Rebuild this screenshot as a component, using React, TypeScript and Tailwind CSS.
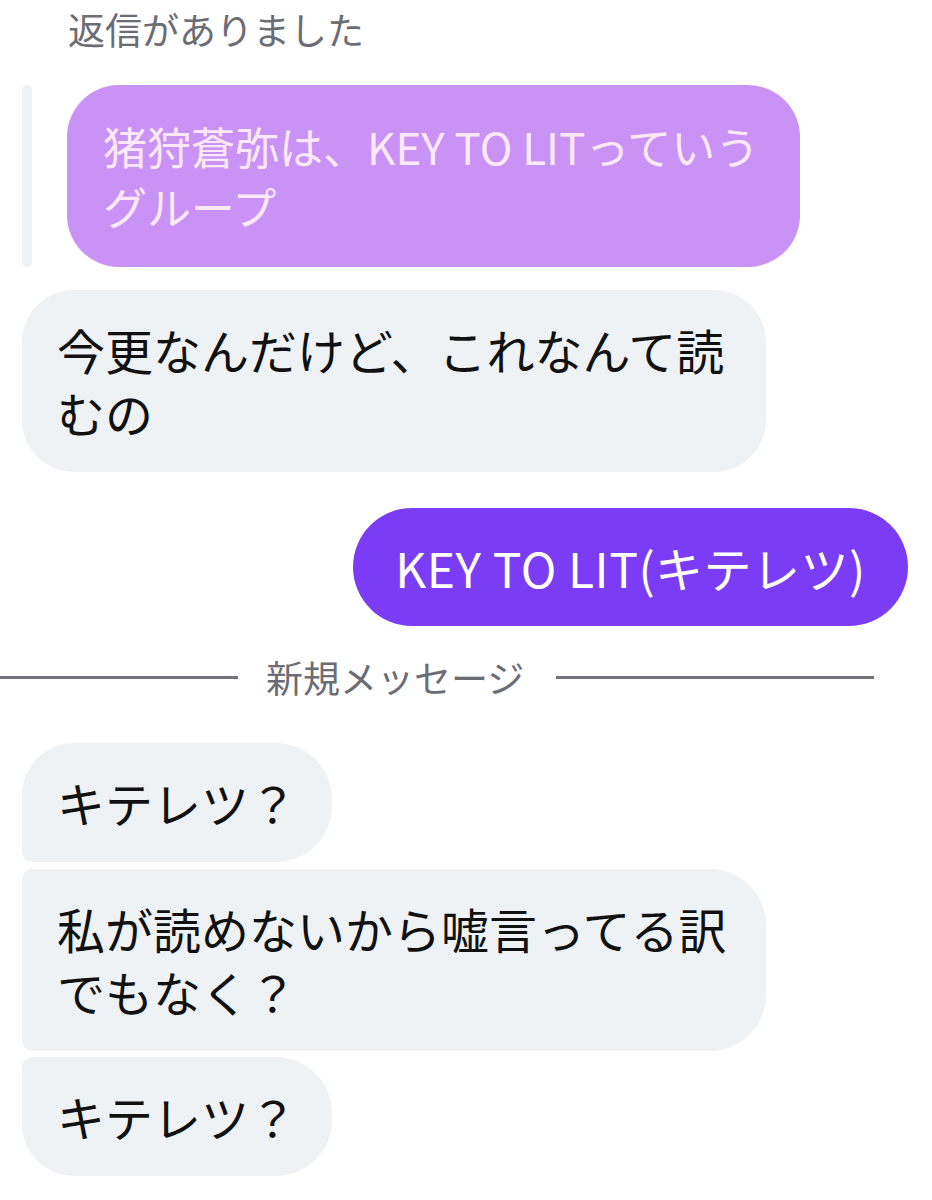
import React from "react";

const font = { fontFamily: '"Noto Sans CJK JP", "Noto Sans", sans-serif' };

export default function App() {
  return (
    <div
      className="w-[932px] h-[1200px] bg-white overflow-hidden flex flex-col"
      style={font}
    >
      {/* header */}
      <div className="pt-[5px] pl-[68px] text-[37px] leading-[48px] text-[#6c6c74]">
        返信がありました
      </div>

      {/* quoted reply */}
      <div className="mt-[32px] flex pl-[22px]">
        <div className="w-[10px] h-[182px] rounded-full bg-[#eef1f5]" />
        <div className="ml-[35px] w-[733px] h-[182px] rounded-[52px] bg-[#c993f6] px-[36px] py-[31px] text-[44px] leading-[60px] text-[#fbe9fb]">
          <div className="whitespace-nowrap">猪狩蒼弥は、KEY TO LITっていう</div>
          <div className="whitespace-nowrap">グループ</div>
        </div>
      </div>

      {/* incoming 1 */}
      <div className="mt-[23px] pl-[22px]">
        <div className="w-[744px] rounded-[52px] bg-[#eff2f5] px-[35px] py-[28px] text-[48px] leading-[63px] text-[#111111]">
          <div className="whitespace-nowrap">今更なんだけど、これなんて読</div>
          <div className="whitespace-nowrap">むの</div>
        </div>
      </div>

      {/* outgoing */}
      <div className="mt-[36px] flex justify-end pr-[24px]">
        <div className="w-[555px] h-[118px] rounded-[59px] bg-[#7b3cf6] flex items-center justify-center text-[48px] leading-[60px] text-white whitespace-nowrap tracking-[0.5px]">
          KEY TO LIT(キテレツ)
        </div>
      </div>

      {/* divider */}
      <div className="mt-[27px] h-[48px] flex items-center">
        <div className="w-[238px] h-[3px] bg-[#72727a]" />
        <div className="ml-[28px] w-[260px] text-[37px] leading-[48px] text-[#6c6c74] whitespace-nowrap">
          新規メッセージ
        </div>
        <div className="ml-[30px] w-[318px] h-[3px] bg-[#72727a]" />
      </div>

      {/* incoming group */}
      <div className="mt-[42px] pl-[22px] flex flex-col items-start">
        <div className="h-[119px] w-[310px] rounded-tl-[52px] rounded-bl-[10px] rounded-r-[56px] bg-[#eff2f5] pl-[35px] flex items-center text-[48px] leading-[63px] text-[#111111] whitespace-nowrap">
          キテレツ？
        </div>
        <div className="mt-[7px] w-[744px] rounded-l-[10px] rounded-r-[56px] bg-[#eff2f5] px-[35px] py-[28px] text-[48px] leading-[63px] text-[#111111]">
          <div className="whitespace-nowrap">私が読めないから嘘言ってる訳</div>
          <div className="whitespace-nowrap">でもなく？</div>
        </div>
        <div className="mt-[6px] h-[119px] w-[310px] rounded-tl-[10px] rounded-bl-[52px] rounded-r-[56px] bg-[#eff2f5] pl-[35px] flex items-center text-[48px] leading-[63px] text-[#111111] whitespace-nowrap">
          キテレツ？
        </div>
      </div>
    </div>
  );
}
